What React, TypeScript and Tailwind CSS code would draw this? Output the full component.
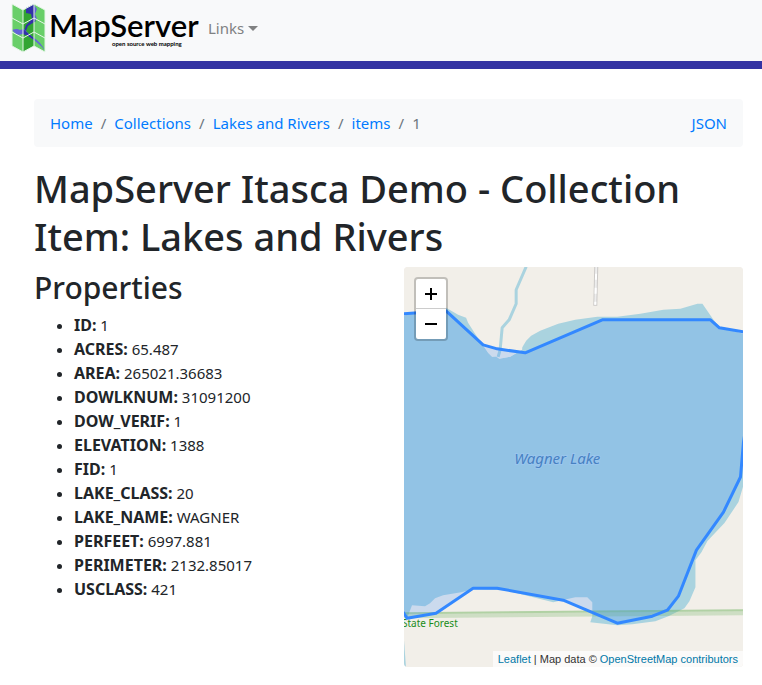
const crumbs = ["Home", "Collections", "Lakes and Rivers", "items"];

const properties = [
  ["ID", "1"],
  ["ACRES", "65.487"],
  ["AREA", "265021.36683"],
  ["DOWLKNUM", "31091200"],
  ["DOW_VERIF", "1"],
  ["ELEVATION", "1388"],
  ["FID", "1"],
  ["LAKE_CLASS", "20"],
  ["LAKE_NAME", "WAGNER"],
  ["PERFEET", "6997.881"],
  ["PERIMETER", "2132.85017"],
  ["USCLASS", "421"],
];

function Logo() {
  return (
    <svg width="190" height="50" viewBox="11 3 190 50" role="img" aria-label="MapServer">
      <path d="M12 4 23 10V52L12 46Z" fill="#69cf69" />
      <path d="M23 10 34 4V46L23 52Z" fill="#32a532" />
      <path d="M34 4 45 10V52L34 46Z" fill="#69cf69" />
      <path d="M26 8 34 4V19L36 21 28 26 26 31 24 31 26 25 32 19 31 14 26 13Z" fill="#3232a8" />
      <path d="M34 5 37 9 35 14 37 19 34 21Z" fill="#6464d8" />
      <path d="M12 30Q17 28 20 30L24 29 29 34 34 38Q41 42 45 51L42 47 34 40 28 36 24 33Q20 36 16 34Z" fill="#6464d8" />
      <path d="M23 29 29 34 34 38V40L28 36 23 34Z" fill="#3232a8" />
      <path
        d="M12 4 23 10 34 4 45 10M12 18 23 24 34 18 45 24M12 32 23 38 34 32 45 38M12 46 23 52 34 46 45 52M12 4V46M23 10V52M34 4V46M45 10V52"
        fill="none"
        stroke="#e6f5e8"
        strokeWidth="1"
      />
      <text x="49" y="37" fontSize="31" fontWeight="600" fontFamily="Lato, sans-serif" fill="#000">MapServer</text>
      <text x="112" y="46" fontSize="6" fontWeight="700" fontFamily="Lato, sans-serif" fill="#000">open source web mapping</text>
    </svg>
  );
}

function LakeMap() {
  return (
    <div className="relative h-[400px] overflow-hidden rounded bg-[#f2efe9]">
      <svg className="block h-full w-full" viewBox="404 267 339 400" preserveAspectRatio="xMidYMid slice" aria-label="Map of Wagner Lake">
        <path d="M404 267H743V667H404Z" fill="#f2efe9" />
        <path
          d="M404 316 425 309 446 308 458 315 466 318 468 323 475 334 483 346 488 353 492 357 496 356 498 351 499 359 510 357 520 351 526 341 531 336 540 331 558 324 575 320 597 317 617 317 640 314 663 310 680 309 697 304 702 304 713 320 719 327 743 334V485L738 502 724 523 707 541 701 552 695 560V587L689 601 684 608 668 616 655 621 632 624 617 625 590 622 592 616V602L587 597 575 597 553 602 533 597 505 590 473 589 461 592 443 595 435 598 430 603 425 606 412 605 409 613 407 618 404 610Z"
          fill="#aad3df"
        />
        <path d="M484 346 488 353 492 357 496 357 499 359 510 357 522 350V347H484Z" fill="#f2efe9" />
        <path d="M526 267 516 290V304L509 320 502 328 500 350 498 357" fill="none" stroke="#aad3df" strokeWidth="3" strokeLinejoin="round" />
        <path d="M404 640 406 667H404Z" fill="#aad3df" />
        <path d="M404 616 743 613" stroke="#6fb35f" strokeOpacity="0.27" strokeWidth="4" />
        <path d="M404 613 743 610" stroke="#6fb35f" strokeOpacity="0.5" strokeWidth="2" />
        <path d="M596 266 595 306" stroke="#cbc9c7" strokeWidth="4" />
        <path d="M596 266 595 305" stroke="#eeeeee" strokeWidth="2" />
        <path d="M596 266 595 305" stroke="#ffffff" strokeWidth="2" strokeDasharray="6 8" strokeDashoffset="6" />
        <g fontFamily="Noto Sans, sans-serif" strokeWidth="2" paintOrder="stroke">
          <text x="514" y="464" fontSize="15" fontStyle="italic" fill="#4d80b3" stroke="#b5d6ea">Wagner Lake</text>
          <text x="402" y="627" fontSize="10" fill="#198c19" stroke="#f2efe9">State Forest</text>
        </g>
        <path
          d="M398 315 404 314 446 311 483 345 497 349 525 353 602 320H710L719 328 743 332 750 333V400L743 442 740 477 723 512 696 550 678 596 667 610 652 616 617 623 563 600 497 588H473L436 613 407 618 398 604Z"
          fill="#3388ff"
          fillOpacity="0.2"
          stroke="#3388ff"
          strokeWidth="3"
          strokeLinejoin="round"
        />
      </svg>
      <div className="absolute left-[10px] top-[10px] flex w-[34px] flex-col overflow-hidden rounded border-2 border-black/20 bg-white bg-clip-padding text-black">
        <button type="button" aria-label="Zoom in" className="flex h-[30px] items-center justify-center border-b border-[#cccccc]">
          <svg width="12" height="12" viewBox="0 0 12 12" stroke="currentColor" strokeWidth="2"><path d="M0 6H12M6 0V12" /></svg>
        </button>
        <button type="button" aria-label="Zoom out" className="flex h-[30px] items-center justify-center">
          <svg width="12" height="12" viewBox="0 0 12 12" stroke="currentColor" strokeWidth="2"><path d="M0 6H12" /></svg>
        </button>
      </div>
      <div className="absolute bottom-0 right-0 bg-white/70 px-[5px] font-['Liberation_Sans',sans-serif] text-[11px] leading-4 text-[#333333]">
        <a href="#leaflet" className="text-[#0078a8]">Leaflet</a> | Map data ©{" "}
        <a href="#osm" className="text-[#0078a8]">OpenStreetMap contributors</a>
      </div>
    </div>
  );
}

export default function App() {
  return (
    <div className="bg-white font-['Noto_Sans',sans-serif] text-[15px] leading-6 text-[#212529]">
      <header className="flex h-[69px] items-start border-b-8 border-[#3333a3] bg-[#f8f9fa] pl-[11px] pt-[3px]">
        <a href="#mapserver"><Logo /></a>
        <button type="button" className="ml-[7px] mt-[13px] flex items-center gap-1 text-[#808182]">
          Links
          <svg width="10" height="5" viewBox="0 0 10 5" fill="currentColor"><path d="M0 0H10L5 5Z" /></svg>
        </button>
      </header>
      <main className="pl-[34px] pr-[19px] pt-[30px]">
        <nav aria-label="Breadcrumb" className="mb-[17px] flex justify-between rounded bg-[#f8f9fa] px-4 py-3 text-[#007bff]">
          <ol className="flex">
            {crumbs.map((name) => (
              <li key={name}>
                <a href="#crumb">{name}</a>
                <span className="px-2 text-[#6c757d]">/</span>
              </li>
            ))}
            <li className="text-[#6c757d]">1</li>
          </ol>
          <a href="#json">JSON</a>
        </nav>
        <h1 className="mb-[7px] text-[38px] font-medium leading-[48px]">MapServer Itasca Demo - Collection Item: Lakes and Rivers</h1>
        <div className="grid grid-cols-2 gap-[30px]">
          <section>
            <h2 className="mb-1 text-[30px] font-medium leading-[42px]">Properties</h2>
            <ul className="list-disc pl-10">
              {properties.map(([name, value]) => (
                <li key={name}><b className="text-base leading-none">{name}:</b> {value}</li>
              ))}
            </ul>
          </section>
          <LakeMap />
        </div>
      </main>
    </div>
  );
}
